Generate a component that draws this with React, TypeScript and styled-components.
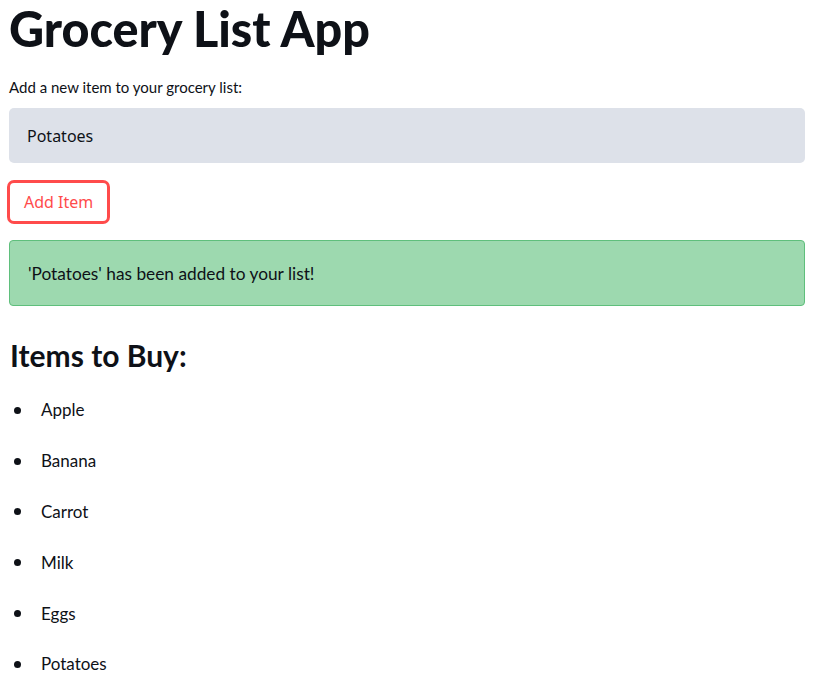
import React from "react";
import styled, { createGlobalStyle } from "styled-components";

const Global = createGlobalStyle`
  html, body { margin: 0; padding: 0; background: #ffffff; }
  body { font-family: "Lato", "Noto Sans", sans-serif; color: #0e1117; }
`;

const Page = styled.main`
  display: flex;
  flex-direction: column;
  padding: 0 9px 0 9px;
  width: 796px;
`;

const Title = styled.h1`
  margin: 0;
  font-family: "Lato", sans-serif;
  font-weight: 900;
  font-size: 48.5px;
  line-height: 57px;
  letter-spacing: 0;
  color: #0e1117;
`;

const Label = styled.label`
  margin-top: 21px;
  font-size: 15px;
  line-height: 18px;
  color: #0e1117;
`;

const Input = styled.div`
  margin-top: 12px;
  height: 55px;
  box-sizing: border-box;
  display: flex;
  align-items: center;
  padding: 0 18px;
  background: #dde1e9;
  border-radius: 5px;
  font-family: "Noto Sans", sans-serif;
  font-size: 16px;
  color: #0e1117;
`;

const Button = styled.button`
  align-self: flex-start;
  margin: 17px 0 0 -2px;
  height: 44px;
  box-sizing: border-box;
  padding: 0 14px;
  background: #ffffff;
  border: 3px solid #ff4b4b;
  border-radius: 7px;
  font-family: "Noto Sans", sans-serif;
  font-size: 16px;
  color: #ff4b4b;
`;

const Alert = styled.div`
  margin-top: 16px;
  height: 66px;
  box-sizing: border-box;
  display: flex;
  align-items: center;
  padding: 0 18px;
  background: #9dd9af;
  border: 1px solid #5fbf7c;
  border-radius: 4px;
  font-size: 17.3px;
  color: #0e1117;
`;

const Heading = styled.h2`
  margin: 31px 0 0 1px;
  font-weight: 700;
  font-size: 30px;
  line-height: 36px;
  color: #0e1117;
`;

const List = styled.ul`
  margin: 12px 0 0 0;
  padding: 0 0 0 5px;
  list-style: none;
`;

const Item = styled.li`
  display: flex;
  align-items: center;
  height: 50.8px;
  font-size: 17px;
  line-height: 24px;
  color: #0e1117;
  &::before {
    content: "";
    width: 7px;
    height: 7px;
    border-radius: 50%;
    background: #0e1117;
    margin-right: 20px;
    flex: none;
  }
`;

const items = ["Apple", "Banana", "Carrot", "Milk", "Eggs", "Potatoes"];

export default function App() {
  return (
    <>
      <Global />
      <Page>
        <Title>Grocery List App</Title>
        <Label>Add a new item to your grocery list:</Label>
        <Input>Potatoes</Input>
        <Button>Add Item</Button>
        <Alert>'Potatoes' has been added to your list!</Alert>
        <Heading>Items to Buy:</Heading>
        <List>
          {items.map((it) => (
            <Item key={it}>{it}</Item>
          ))}
        </List>
      </Page>
    </>
  );
}
